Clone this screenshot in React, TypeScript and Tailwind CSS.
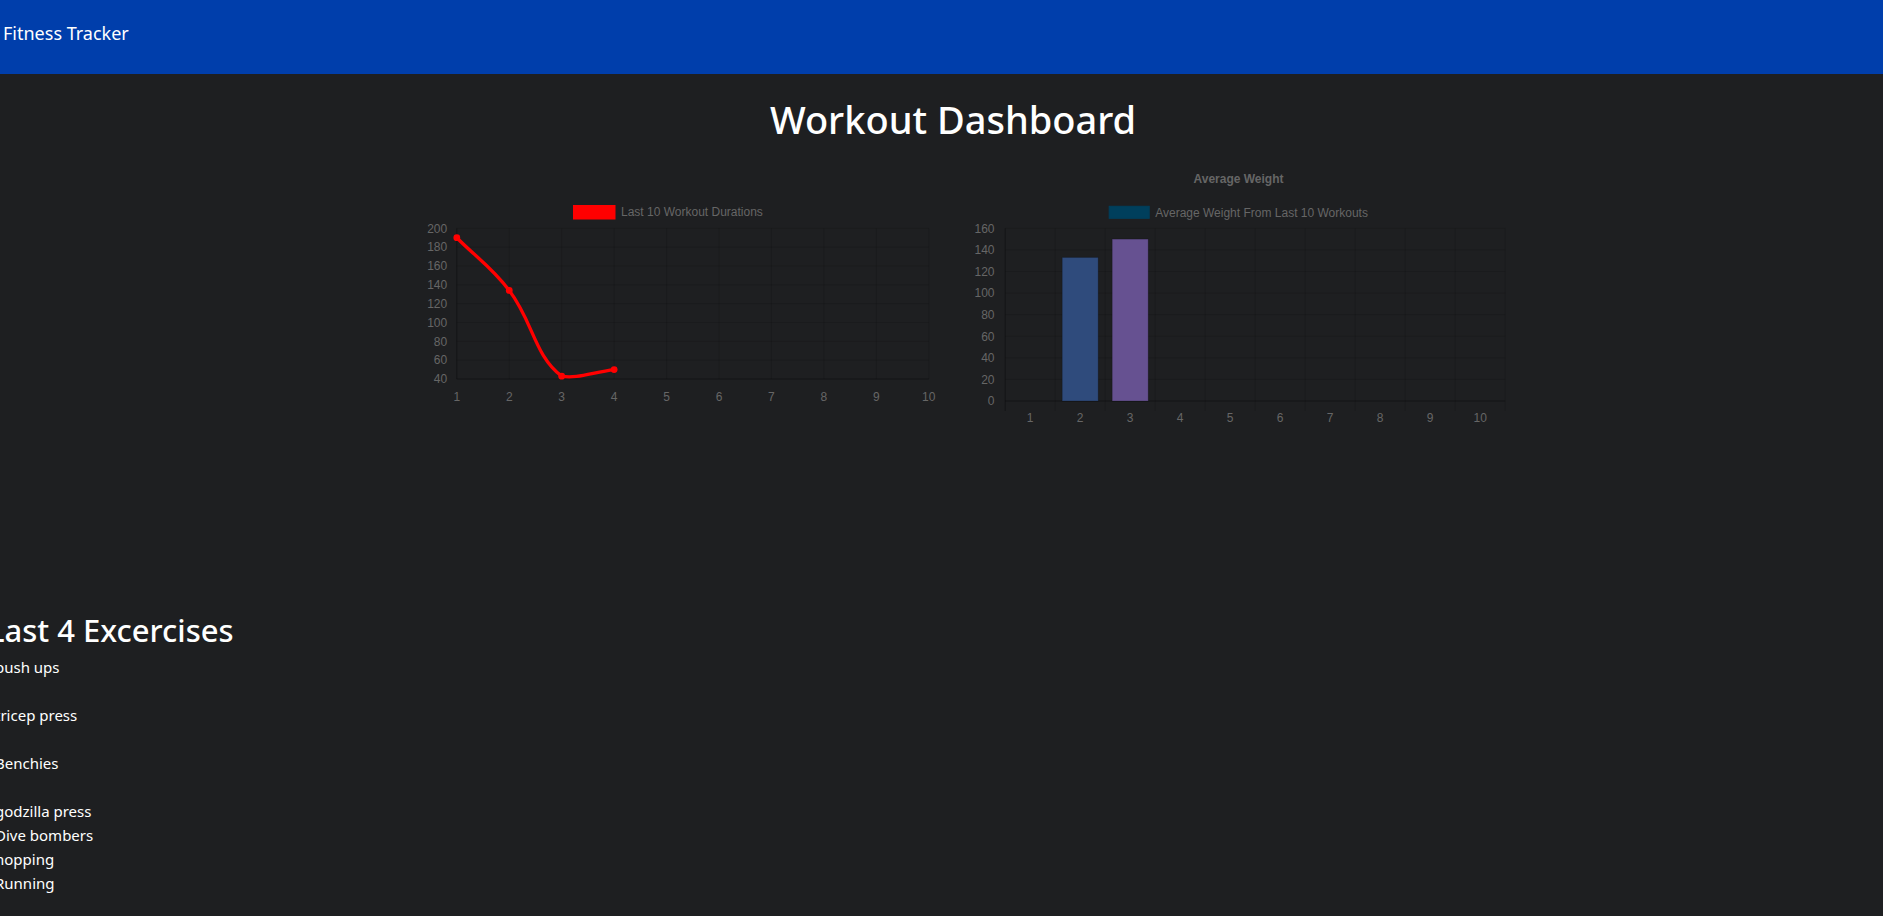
type Pt = { x: number; y: number };

// chart.js style spline (tension 0.4), control points kept inside the plot
function splinePath(pts: Pt[], top: number, bottom: number, t = 0.4) {
  const clamp = (y: number) => Math.min(bottom, Math.max(top, y));
  const ctrl = pts.map((p, i) => {
    const prev = pts[i - 1] ?? p;
    const next = pts[i + 1] ?? p;
    const d01 = Math.hypot(p.x - prev.x, p.y - prev.y);
    const d12 = Math.hypot(next.x - p.x, next.y - p.y);
    const s01 = d01 + d12 ? d01 / (d01 + d12) : 0;
    const s12 = d01 + d12 ? d12 / (d01 + d12) : 0;
    return {
      prev: { x: p.x - t * s01 * (next.x - prev.x), y: clamp(p.y - t * s01 * (next.y - prev.y)) },
      next: { x: p.x + t * s12 * (next.x - prev.x), y: clamp(p.y + t * s12 * (next.y - prev.y)) },
    };
  });
  let d = `M${pts[0].x},${pts[0].y}`;
  for (let i = 1; i < pts.length; i++) {
    d += ` C${ctrl[i - 1].next.x},${ctrl[i - 1].next.y} ${ctrl[i].prev.x},${ctrl[i].prev.y} ${pts[i].x},${pts[i].y}`;
  }
  return d;
}

const labels = [1, 2, 3, 4, 5, 6, 7, 8, 9, 10];
const grid = "rgba(0,0,0,0.12)";
const axis = "rgba(0,0,0,0.35)";
const tickColor = "#666";
const chartFont = "'Liberation Sans', Arial, sans-serif";

const DurationChart = () => {
  const durations = [190, 134, 43, 50];
  const x0 = 456.3;
  const x1 = 928.3;
  const top = 228.3;
  const bottom = 379;
  const step = (x1 - x0) / 9;
  const yOf = (v: number) => bottom - ((v - 40) / 160) * (bottom - top);
  const pts = durations.map((v, i) => ({ x: x0 + i * step, y: yOf(v) }));
  const yTicks = [200, 180, 160, 140, 120, 100, 80, 60, 40];

  return (
    <svg width={530} height={280} viewBox="414.5 160 530 280" fontFamily={chartFont}>
      {/* legend */}
      <rect x={573} y={205.5} width={41.5} height={13.5} fill="#ff0000" stroke="#ff0000" />
      <text x={620.5} y={216} fontSize={12} fill={tickColor}>
        Last 10 Workout Durations
      </text>

      {/* grid */}
      {yTicks.map((v) => (
        <line key={v} x1={x0} x2={x1} y1={yOf(v)} y2={yOf(v)} stroke={v === 40 ? axis : grid} strokeWidth={1} />
      ))}
      {labels.map((l, i) => (
        <line key={l} x1={x0 + i * step} x2={x0 + i * step} y1={top} y2={bottom} stroke={i === 0 ? axis : grid} strokeWidth={1} />
      ))}

      {/* tick labels */}
      {yTicks.map((v) => (
        <text key={v} x={446.7} y={yOf(v) + 4.3} fontSize={12} fill={tickColor} textAnchor="end">
          {v}
        </text>
      ))}
      {labels.map((l, i) => (
        <text key={l} x={x0 + i * step} y={400.6} fontSize={12} fill={tickColor} textAnchor="middle">
          {l}
        </text>
      ))}

      {/* line */}
      <path d={splinePath(pts, top, bottom)} fill="none" stroke="#ff0000" strokeWidth={3.3} />
      {pts.map((p, i) => (
        <circle key={i} cx={p.x} cy={p.y} r={3.4} fill="#ff0000" />
      ))}
    </svg>
  );
};

const WeightChart = () => {
  const weights = [0, 133, 150];
  const colors = ["#003f5c", "#2f4b7c", "#665191"];
  const x0 = 1004.7;
  const cat = 50;
  const x1 = x0 + cat * 10;
  const top = 228.3;
  const bottom = 401;
  const yOf = (v: number) => bottom - (v / 160) * (bottom - top);
  const yTicks = [160, 140, 120, 100, 80, 60, 40, 20, 0];

  return (
    <svg width={550} height={280} viewBox="964.5 160 550 280" fontFamily={chartFont}>
      <text x={1238} y={183.3} fontSize={12} fontWeight="bold" fill={tickColor} textAnchor="middle">
        Average Weight
      </text>

      {/* legend */}
      <rect x={1108.7} y={206.3} width={40} height={12} fill="#003f5c" stroke="#003f5c" />
      <text x={1154.7} y={216.5} fontSize={12} fill={tickColor}>
        Average Weight From Last 10 Workouts
      </text>

      {/* grid */}
      {yTicks.map((v) => (
        <line key={v} x1={x0} x2={x1} y1={yOf(v)} y2={yOf(v)} stroke={v === 0 ? axis : grid} strokeWidth={1} />
      ))}
      {Array.from({ length: 11 }, (_, i) => (
        <line key={i} x1={x0 + i * cat} x2={x0 + i * cat} y1={top} y2={bottom + 10} stroke={i === 0 ? axis : grid} strokeWidth={1} />
      ))}

      {/* tick labels */}
      {yTicks.map((v) => (
        <text key={v} x={994} y={yOf(v) + 4.3} fontSize={12} fill={tickColor} textAnchor="end">
          {v}
        </text>
      ))}
      {labels.map((l, i) => (
        <text key={l} x={x0 + (i + 0.5) * cat} y={422} fontSize={12} fill={tickColor} textAnchor="middle">
          {l}
        </text>
      ))}

      {/* bars */}
      {weights.map((v, i) =>
        v > 0 ? (
          <rect
            key={i}
            x={x0 + (i + 0.5) * cat - cat * 0.36}
            y={yOf(v)}
            width={cat * 0.72}
            height={bottom - yOf(v)}
            fill={colors[i]}
            stroke="rgba(0,0,0,0.2)"
            strokeWidth={1}
          />
        ) : null
      )}
    </svg>
  );
};

const workouts = [
  ["push ups"],
  ["tricep press"],
  ["Benchies"],
  ["godzilla press", "Dive bombers", "hopping", "Running"],
];

export default function App() {
  return (
    <div className="min-h-screen w-full overflow-hidden bg-[#1e1f21] text-white font-['Noto_Sans',sans-serif]">
      {/* Navbar */}
      <nav className="h-[74px] bg-[#003eab] pl-[3px] pt-[18px]">
        <span className="text-[18px] leading-[30px] text-white">Fitness Tracker</span>
      </nav>

      {/* Title */}
      <h1 className="mt-[21px] pl-[23px] text-center text-[38px] font-medium leading-[48px]">Workout Dashboard</h1>

      {/* Charts */}
      <div className="mt-[17px] flex justify-center gap-5 pl-[46px]">
        <DurationChart />
        <WeightChart />
      </div>

      {/* Exercises */}
      <div className="mt-[171px]">
        <h2 className="-ml-[12px] text-[31px] font-medium leading-[38px]">Last 4 Excercises</h2>
        <div className="mt-[6px] -ml-[5px] text-[15px] leading-6">
          {workouts.map((w, i) => (
            <div key={i} className="mb-6">
              {w.map((e) => (
                <p key={e}>{e}</p>
              ))}
            </div>
          ))}
        </div>
      </div>
    </div>
  );
}
